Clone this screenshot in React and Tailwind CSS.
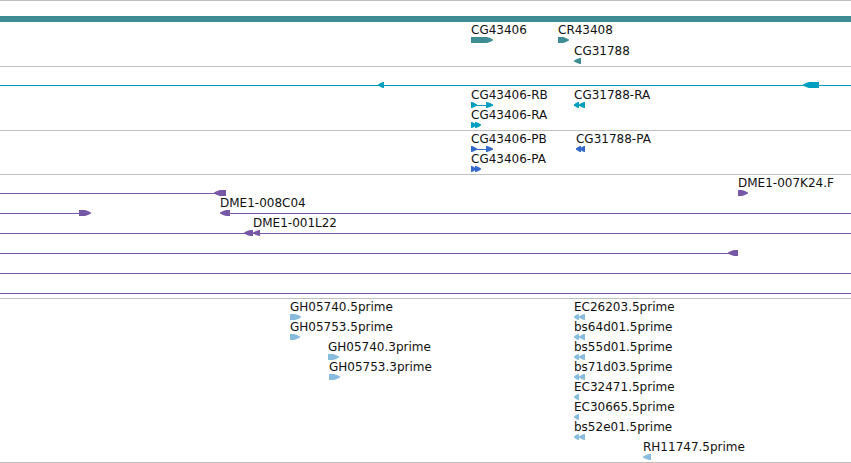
import React from 'react'

// width of the visible region, all feature positions are relative to it
const SPAN = 851

const tracks = [
  {
    name: 'Genes',
    color: 'text-[#3e8d95]',
    spacing: 'gap-px',
    rows: [
      { bars: [[0, 851]] },
      { labels: [[471, 'CG43406'], [558, 'CR43408']], arrows: [[471, 493, 'r'], [558, 569, 'r']] },
      { labels: [[574, 'CG31788']], arrows: [[574, 581, 'l']] },
    ],
  },
  {
    name: 'Transcripts',
    color: 'text-[#009fbf]',
    rows: [
      { lines: [[0, 851]], arrows: [[378, 384, 'l'], [803, 819, 'l']] },
      {
        labels: [[471, 'CG43406-RB'], [574, 'CG31788-RA']],
        lines: [[471, 493], [574, 585]],
        arrows: [[471, 477, 'r'], [486, 493, 'r'], [574, 579, 'l'], [579, 585, 'l']],
      },
      { labels: [[471, 'CG43406-RA']], arrows: [[471, 476, 'r'], [475, 481, 'r']] },
    ],
  },
  {
    name: 'Proteins',
    color: 'text-[#336acb]',
    rows: [
      {
        labels: [[471, 'CG43406-PB'], [576, 'CG31788-PA']],
        lines: [[471, 493], [576, 585]],
        arrows: [[471, 477, 'r'], [486, 493, 'r'], [576, 581, 'l'], [580, 585, 'l']],
      },
      { labels: [[471, 'CG43406-PA']], arrows: [[471, 476, 'r'], [475, 481, 'r']] },
    ],
  },
  {
    name: 'BAC ends',
    color: 'text-[#7758a6]',
    rows: [
      { labels: [[738, 'DME1-007K24.F']], lines: [[0, 220]], arrows: [[214, 226, 'l'], [738, 748, 'r']] },
      { labels: [[220, 'DME1-008C04']], lines: [[0, 79], [226, 851]], arrows: [[79, 91, 'r'], [220, 230, 'l']] },
      { labels: [[253, 'DME1-001L22']], lines: [[0, 851]], arrows: [[244, 253, 'l'], [253, 260, 'l']] },
      { lines: [[0, 732]], arrows: [[728, 738, 'l']] },
      { lines: [[0, 851]] },
      { lines: [[0, 851]] },
    ],
  },
  {
    name: 'ESTs',
    color: 'text-[#87bcde]',
    rows: [
      {
        labels: [[290, 'GH05740.5prime'], [574, 'EC26203.5prime']],
        arrows: [[290, 301, 'r'], [574, 579, 'l'], [579, 585, 'l']],
      },
      {
        labels: [[290, 'GH05753.5prime'], [574, 'bs64d01.5prime']],
        arrows: [[290, 300, 'r'], [574, 579, 'l'], [579, 585, 'l']],
      },
      {
        labels: [[328, 'GH05740.3prime'], [574, 'bs55d01.5prime']],
        arrows: [[328, 339, 'r'], [574, 579, 'l'], [579, 585, 'l']],
      },
      {
        labels: [[329, 'GH05753.3prime'], [574, 'bs71d03.5prime']],
        arrows: [[329, 340, 'r'], [574, 579, 'l'], [579, 585, 'l']],
      },
      { labels: [[574, 'EC32471.5prime']], arrows: [[574, 579, 'l']] },
      { labels: [[574, 'EC30665.5prime']], arrows: [[574, 579, 'l']] },
      { labels: [[574, 'bs52e01.5prime']], arrows: [[574, 579, 'l'], [579, 585, 'l']] },
      { labels: [[643, 'RH11747.5prime']], arrows: [[643, 651, 'l']] },
    ],
  },
]

// blunt head: shoulders stay wide for half of its length, then close to the tip
const arrowPoints = (start, end, dir) => {
  const head = Math.min(6, end - start - 1)
  const mid = head / 2
  return dir === 'r'
    ? `${start},0 ${end - head},0 ${end - mid},1 ${end},2.5 ${end},3.5 ${end - mid},5 ${end - head},6 ${start},6`
    : `${end},0 ${start + head},0 ${start + mid},1 ${start},2.5 ${start},3.5 ${start + mid},5 ${start + head},6 ${end},6`
}

const Row = ({ labels = [], bars = [], lines = [], arrows = [] }) => (
  <div className="relative flex h-5 flex-col justify-end">
    {labels.map(([x, text]) => (
      <span
        key={text}
        className="absolute top-0 whitespace-nowrap text-xs leading-[14px] text-[#111]"
        style={{ left: `${(x / SPAN) * 100}%` }}
      >
        {text}
      </span>
    ))}
    <svg className="block h-1.5 w-full" viewBox={`0 0 ${SPAN} 6`} preserveAspectRatio="none" fill="currentColor">
      {bars.map(([start, end]) => (
        <rect key={start} x={start} y="0" width={end - start} height="6" />
      ))}
      {lines.map(([start, end]) => (
        <rect key={start} x={start} y="3" width={end - start} height="1" />
      ))}
      {arrows.map(([start, end, dir]) => (
        <polygon key={start} points={arrowPoints(start, end, dir)} />
      ))}
    </svg>
  </div>
)

const Track = ({ name, color, spacing, rows }) => (
  <section
    aria-label={name}
    className={`flex flex-col border-b border-[#bfbfbf] pt-px pb-0.5 ${color} ${spacing || ''}`}
  >
    {rows.map((row, index) => (
      <Row key={`${name}-${index}`} {...row} />
    ))}
  </section>
)

const App = () => {
  return (
    <main className="w-full overflow-hidden border-t border-[#bfbfbf] bg-white font-['DejaVu_Sans',sans-serif]">
      {tracks.map((track) => (
        <Track key={track.name} {...track} />
      ))}
    </main>
  )
}

export default App
